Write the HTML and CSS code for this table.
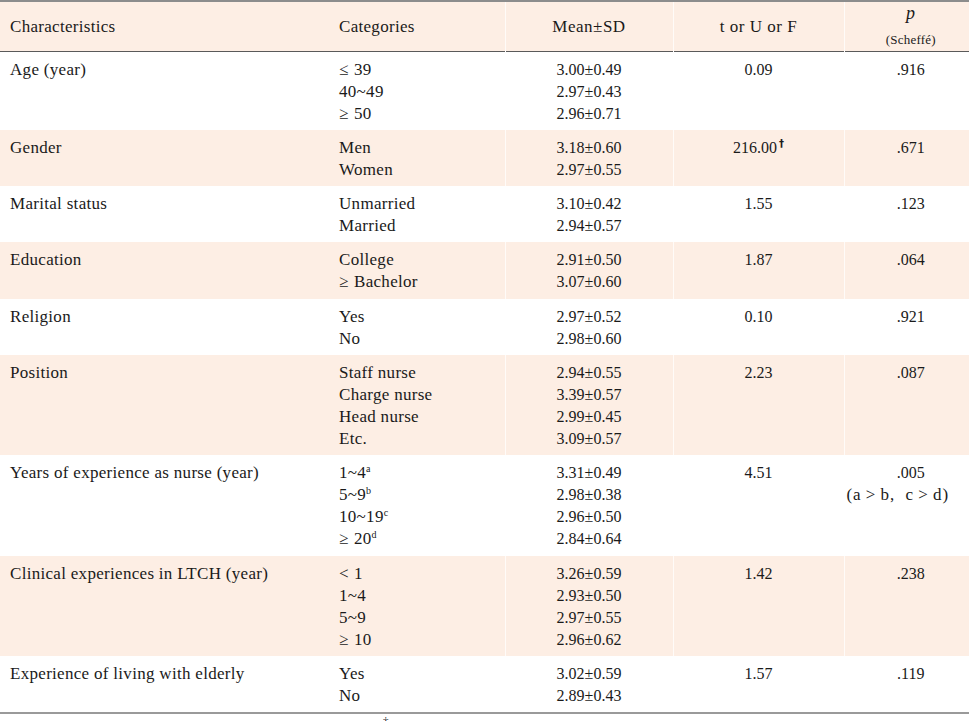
FILE: index.html
```html
<!DOCTYPE html>
<html lang="en">
<head>
<meta charset="utf-8">
<title>Characteristics table</title>
<link rel="stylesheet" href="styles.css">
</head>
<body>
<table class="tbl">
  <colgroup>
    <col class="c1"><col class="c2"><col class="c3"><col class="c4"><col class="c5">
  </colgroup>
  <thead>
    <tr>
      <th class="left">Characteristics</th>
      <th class="left">Categories</th>
      <th class="mid">Mean±SD</th>
      <th class="mid">t or U or F</th>
      <th class="mid"><div class="p-sym">p</div><div class="p-note">(Scheffé)</div></th>
    </tr>
  </thead>
  <tbody>
    <tr>
      <td class="left">Age (year)</td>
      <td class="left"><span class="sym">≤</span>39<br>40~49<br><span class="sym">≥</span>50</td>
      <td class="mid">3.00±0.49<br>2.97±0.43<br>2.96±0.71</td>
      <td class="mid">0.09</td>
      <td class="mid">.916</td>
    </tr>
    <tr class="shade">
      <td class="left">Gender</td>
      <td class="left">Men<br>Women</td>
      <td class="mid">3.18±0.60<br>2.97±0.55</td>
      <td class="mid">216.00<sup class="dag">†</sup></td>
      <td class="mid">.671</td>
    </tr>
    <tr>
      <td class="left">Marital status</td>
      <td class="left">Unmarried<br>Married</td>
      <td class="mid">3.10±0.42<br>2.94±0.57</td>
      <td class="mid">1.55</td>
      <td class="mid">.123</td>
    </tr>
    <tr class="shade">
      <td class="left">Education</td>
      <td class="left">College<br><span class="sym">≥</span>Bachelor</td>
      <td class="mid">2.91±0.50<br>3.07±0.60</td>
      <td class="mid">1.87</td>
      <td class="mid">.064</td>
    </tr>
    <tr>
      <td class="left">Religion</td>
      <td class="left">Yes<br>No</td>
      <td class="mid">2.97±0.52<br>2.98±0.60</td>
      <td class="mid">0.10</td>
      <td class="mid">.921</td>
    </tr>
    <tr class="shade">
      <td class="left">Position</td>
      <td class="left">Staff nurse<br>Charge nurse<br>Head nurse<br>Etc.</td>
      <td class="mid">2.94±0.55<br>3.39±0.57<br>2.99±0.45<br>3.09±0.57</td>
      <td class="mid">2.23</td>
      <td class="mid">.087</td>
    </tr>
    <tr>
      <td class="left">Years of experience as nurse (year)</td>
      <td class="left">1~4<sup class="ltr">a</sup><br>5~9<sup class="ltr">b</sup><br>10~19<sup class="ltr">c</sup><br><span class="sym">≥</span>20<sup class="ltr">d</sup></td>
      <td class="mid">3.31±0.49<br>2.98±0.38<br>2.96±0.50<br>2.84±0.64</td>
      <td class="mid">4.51</td>
      <td class="mid">.005<br><span class="post">(a&thinsp;&gt;&thinsp;b,&nbsp; c&thinsp;&gt;&thinsp;d)</span></td>
    </tr>
    <tr class="shade">
      <td class="left">Clinical experiences in LTCH (year)</td>
      <td class="left"><span class="sym">&lt;</span>1<br>1~4<br>5~9<br><span class="sym">≥</span>10</td>
      <td class="mid">3.26±0.59<br>2.93±0.50<br>2.97±0.55<br>2.96±0.62</td>
      <td class="mid">1.42</td>
      <td class="mid">.238</td>
    </tr>
    <tr>
      <td class="left">Experience of living with elderly</td>
      <td class="left">Yes<br>No</td>
      <td class="mid">3.02±0.59<br>2.89±0.43</td>
      <td class="mid">1.57</td>
      <td class="mid">.119</td>
    </tr>
  </tbody>
</table>
<p class="foot">LTCH=Long-term care hospitals; SD=Standard deviation; <sup class="fdag">†</sup>Mann-Whitney U test.</p>
</body>
</html>
```
FILE: styles.css
```css
html, body {
  margin: 0;
  padding: 0;
  overflow: hidden;
  background: #ffffff;
}
body {
  font-family: "Liberation Serif", "Times New Roman", serif;
  font-size: 16px;
  color: #1a1a1a;
  width: 969px;
  height: 721px;
}
.tbl {
  width: 977px;
  border-collapse: collapse;
  table-layout: fixed;
  border-top: 2px solid #8c8c8c;
  border-bottom: 2px solid #9a9a9a;
}
.c1 { width: 329px; }
.c2 { width: 176px; }
.c3 { width: 168px; }
.c4 { width: 171px; }
.c5 { width: 133px; }

thead tr {
  background: #fdeee4;
  border-bottom: 1px solid #5a5a5a;
}
th {
  font-weight: normal;
  font-size: 17px;
  letter-spacing: 0.5px;
  height: 50px;
  padding: 1px 10px 0 10px;
  line-height: 22px;
  vertical-align: middle;
  box-sizing: border-box;
}
th.left { letter-spacing: 0.3px; }
th + th + th, td + td + td {
  border-left: 1px solid rgba(255, 255, 255, 0.75);
}
.left { text-align: left; }
.mid { text-align: center; }

.p-sym {
  font-style: italic;
  font-size: 18px;
  line-height: 16px;
}
.p-note {
  font-size: 13px;
  letter-spacing: 0.2px;
  line-height: 18px;
  margin-top: 10px;
}

td {
  vertical-align: top;
  line-height: 22px;
  padding: 7px 10px 5.33px 10px;
}
td.left {
  font-size: 17px;
  letter-spacing: 0.3px;
}
.shade { background: #fdeee4; }

.sym {
  display: inline-block;
  width: 15px;
  text-align: left;
}
sup.ltr {
  font-size: 10px;
  line-height: 0;
  vertical-align: 6px;
  letter-spacing: 0;
}
sup.dag {
  font-family: "DejaVu Sans", sans-serif;
  font-weight: bold;
  font-size: 10px;
  line-height: 0;
  vertical-align: 6px;
  margin-left: 2px;
}
.post {
  display: inline-block;
  white-space: nowrap;
  font-size: 17px;
  letter-spacing: 0.9px;
  margin-left: -9px;
  margin-right: 17px;
}
.foot {
  margin: 0;
  padding: 6px 10px 0 7px;
  font-size: 16px;
  line-height: 16px;
  white-space: nowrap;
}
.fdag {
  font-size: 11px;
  line-height: 0;
  vertical-align: 9px;
}
```
